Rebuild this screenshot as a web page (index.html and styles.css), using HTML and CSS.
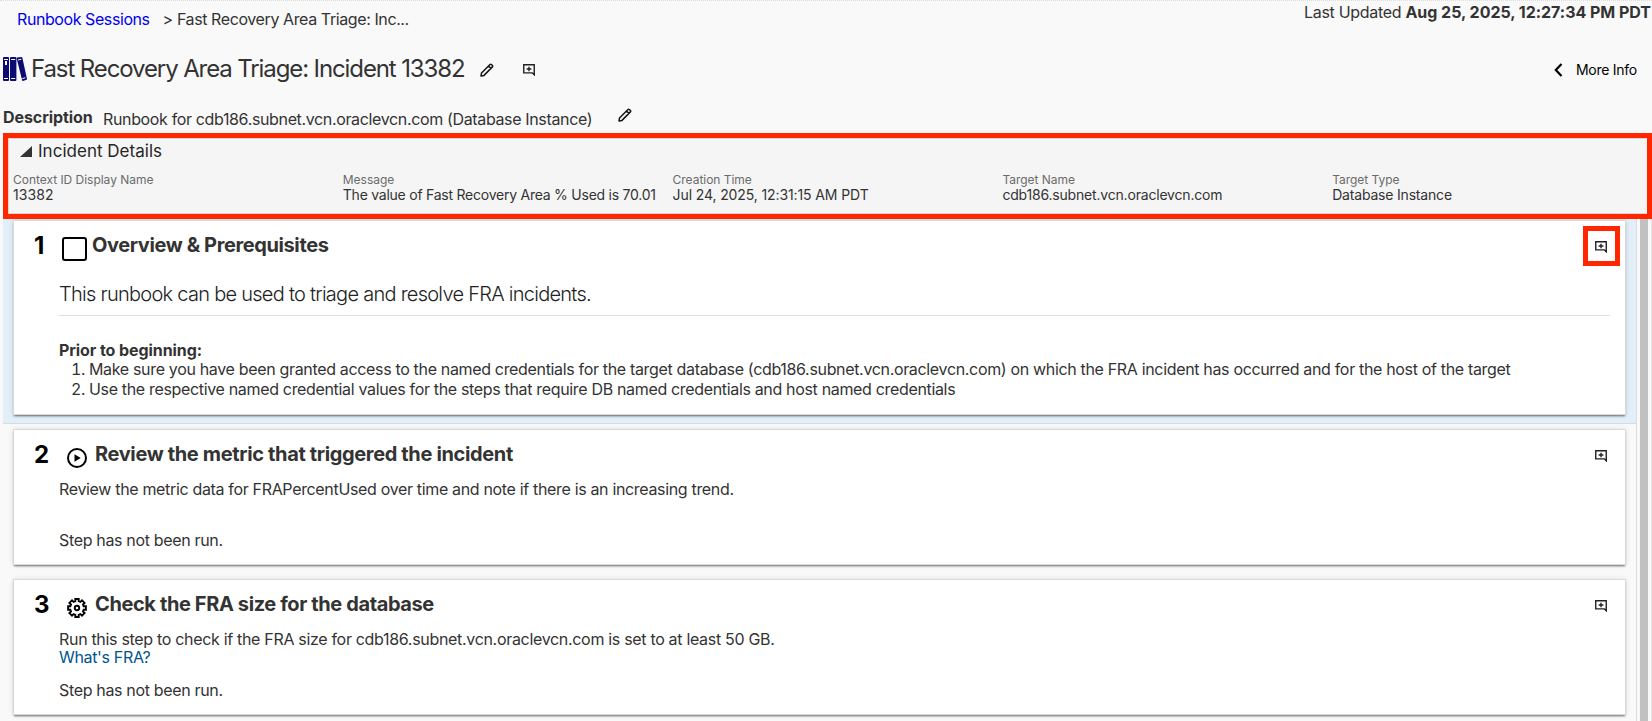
FILE: index.html
```
<!DOCTYPE html>
<html lang="en">
<head>
<meta charset="utf-8">
<title>Fast Recovery Area Triage: Incident 13382</title>
<link rel="stylesheet" href="styles.css">
</head>
<body>
<svg class="defs" aria-hidden="true">
  <symbol id="pencil" viewBox="0 0 14 14">
    <path d="M1 13l.5-3L10 1.5q.7-.6 1.4 0l1 1q.6.7 0 1.4L4 12.4z M8.5 3l2.4 2.4" fill="none" stroke="#161513" stroke-width="1.5" stroke-linejoin="round"/>
  </symbol>
  <symbol id="comment" viewBox="0 0 12 12">
    <path d="M.75.75h10.5v10l-1.9-1.9H.75z" fill="none" stroke="#222" stroke-width="1.4"/>
    <path d="M9 9h3v3z" fill="#222"/>
    <path d="M6 2.8v4.4M3.6 5h4.8" fill="none" stroke="#222" stroke-width="1.4"/>
  </symbol>
</svg>

<header class="topbar">
  <nav class="crumbs"><a class="crumb-link" href="#">Runbook Sessions</a><span class="crumb-current">&gt; Fast Recovery Area Triage: Inc...</span></nav>
  <div class="updated"><span class="updated-label">Last Updated</span> <b class="updated-time">Aug 25, 2025, 12:27:34 PM PDT</b></div>
</header>

<div class="title-row">
  <svg class="books" viewBox="0 0 24 24">
    <g fill="#0b0b73">
      <rect x="0" y="0" width="6" height="24" rx="1"/>
      <rect x="7" y="0" width="6.4" height="24" rx="1"/>
      <path d="M13.6 1.2q0-.6.6-.7L18.600.100q.6 0 .7.500L24 22q.1.600-.5.800L20 24q-.6.100-.8-.500z"/>
    </g>
    <path d="M1 2.500h4M1 21.500h4M8.200 2.500h4M8.200 21.500h4M15 3l3.300-.8M19.300 21.600l3-.8" stroke="#fff" fill="none"/>
    <path d="M3 4v4" stroke="#fff" stroke-width="2"/>
  </svg>
  <h1 class="title">Fast Recovery Area Triage: Incident 13382</h1>
  <svg class="pencil"><use href="#pencil"/></svg>
  <svg class="comment title-comment"><use href="#comment"/></svg>
  <div class="more-info">
    <svg class="chevron" viewBox="0 0 9 14"><path d="M7.500 1L1.800 7l5.700 6" fill="none" stroke="#000" stroke-width="2.200"/></svg>
    <span>More Info</span>
  </div>
</div>

<div class="description-row">
  <b class="description-label">Description</b>
  <span class="description-text">Runbook for cdb186.subnet.vcn.oraclevcn.com (Database Instance)</span>
  <svg class="pencil"><use href="#pencil"/></svg>
</div>

<section class="incident">
  <div class="incident-inner">
    <div class="incident-head">
      <svg class="triangle" viewBox="0 0 11 10"><path d="M11 0v10H0z" fill="#333"/></svg>
      <span>Incident Details</span>
    </div>
    <dl class="details">
      <div><dt>Context ID Display Name</dt><dd class="context-id">13382</dd></div>
      <div><dt>Message</dt><dd class="message">The value of Fast Recovery Area % Used is 70.01</dd></div>
      <div><dt>Creation Time</dt><dd class="time">Jul 24, 2025, 12:31:15 AM PDT</dd></div>
      <div><dt>Target Name</dt><dd>cdb186.subnet.vcn.oraclevcn.com</dd></div>
      <div><dt>Target Type</dt><dd>Database Instance</dd></div>
    </dl>
  </div>
</section>

<div class="scroll-area">
  <main class="steps">
    <div class="step step-active">
      <article class="card card-overview">
        <div class="card-head">
          <span class="number">1</span>
          <span class="checkbox"></span>
          <h2 class="heading">Overview &amp; Prerequisites</h2>
          <span class="callout"><svg class="comment"><use href="#comment"/></svg></span>
        </div>
        <div class="card-body">
          <p class="lead">This runbook can be used to triage and resolve FRA incidents.</p>
          <p class="prior">Prior to beginning:</p>
          <ol class="list">
            <li>Make sure you have been granted access to the named credentials for the target database (cdb186.subnet.vcn.oraclevcn.com) on which the FRA incident has occurred and for the host of the target</li>
            <li>Use the respective named credential values for the steps that require DB named credentials and host named credentials</li>
          </ol>
        </div>
      </article>
    </div>
    <div class="step">
      <article class="card">
        <div class="card-head">
          <span class="number">2</span>
          <svg class="step-icon" viewBox="0 0 20 20"><circle cx="10" cy="10" r="9" fill="none" stroke="#000" stroke-width="2"/><path d="M7.500 6.200l6.200 3.800-6.200 3.800z"/></svg>
          <h2 class="heading heading-review">Review the metric that triggered the incident</h2>
          <svg class="comment"><use href="#comment"/></svg>
        </div>
        <div class="card-body">
          <p>Review the metric data for FRAPercentUsed over time and note if there is an increasing trend.</p>
          <p class="status">Step has not been run.</p>
        </div>
      </article>
    </div>
    <div class="step">
      <article class="card">
        <div class="card-head">
          <span class="number">3</span>
          <svg class="step-icon" viewBox="0 0 20 20">
            <path d="M8.300 1h3.400v2.200l1.700.700 1.600-1.600 2.600 2.600-1.600 1.600.700 1.800h2.200v3.400h-2.200l-.7 1.800 1.600 1.600-2.600 2.600-1.600-1.600-1.700.700v2.200H8.300v-2.200l-1.700-.7L5 17.700l-2.600-2.600L4 13.500l-.7-1.800H1.100V8.300h2.200L4 6.500 2.400 4.900 5 2.300l1.600 1.600 1.700-.7z" fill="none" stroke="#000" stroke-width="1.900"/>
            <circle cx="10" cy="10" r="2.200" fill="none" stroke="#000" stroke-width="1.900"/>
          </svg>
          <h2 class="heading">Check the FRA size for the database</h2>
          <svg class="comment"><use href="#comment"/></svg>
        </div>
        <div class="card-body">
          <p class="run-text">Run this step to check if the FRA size for cdb186.subnet.vcn.oraclevcn.com is set to at least 50 GB.</p>
          <a class="body-link" href="#">What's FRA?</a>
          <p class="status status-near">Step has not been run.</p>
        </div>
      </article>
    </div>
  </main>
  <div class="scrollbar"><div class="thumb"></div></div>
</div>
</body>
</html>
```
FILE: styles.css
```
* { box-sizing: border-box; }
body, h1, h2, p, ol, dl, dd { margin: 0; }
body {
  height: 721px;
  overflow: hidden;
  display: flex;
  flex-direction: column;
  background: #f9f9f9;
  color: #333;
  font: 16px/20px Inter, "Liberation Sans", sans-serif;
  letter-spacing: -0.335px;
  white-space: nowrap;
}
a { text-decoration: none; }
svg { display: block; flex: none; }
.defs { position: absolute; width: 0; height: 0; }

.topbar {
  display: flex;
  justify-content: space-between;
  height: 53px;
  flex: none;
  padding: 1px 1px 0 17px;
  border-top: 1px dotted #ddd;
}
.crumbs { padding-top: 7px; display: flex; gap: 13px; }
.crumb-link { color: #0000ee; letter-spacing: -0.42px; }
.crumb-current { letter-spacing: -0.4px; }
.updated-label { letter-spacing: -0.3px; }
.updated-time { letter-spacing: -0.03px; }

.title-row { display: flex; align-items: flex-start; height: 54px; flex: none; padding-left: 3px; }
.books { width: 24px; height: 24px; margin-top: 4px; }
.title {
  margin: 1px 0 0 4px;
  width: 449px;
  font-size: 24px;
  font-weight: 400;
  line-height: 30px;
  letter-spacing: -1.11px;
}
.pencil { width: 14px; height: 14px; }
.title-row .pencil { margin-top: 10px; }
.comment { width: 12px; height: 12px; }
.title-comment { margin: 11px 0 0 29px; }
.more-info {
  margin: 7px 15px 0 auto;
  display: flex;
  align-items: center;
  gap: 13px;
  color: #000;
  font-size: 14px;
  letter-spacing: -0.26px;
}
.chevron { width: 9px; height: 14px; }

.description-row { display: flex; height: 26px; flex: none; padding-left: 3px; }
.description-label { letter-spacing: -0.08px; width: 100px; }
.description-text { padding-top: 2px; width: 515px; letter-spacing: -0.355px; }
.description-row .pencil { margin-top: 1px; }

.incident { margin-left: 3px; height: 86px; flex: none; border: 5px solid #ff2600; }
.incident-inner { height: 76px; background: #f5f5f5; border: 1px solid #d6d6d6; border-right: 0; }
.incident-head {
  display: flex;
  align-items: center;
  gap: 6px;
  padding: 2px 0 0 11px;
  font-size: 17px;
  letter-spacing: 0.02px;
  color: #262626;
}
.triangle { width: 12px; height: 11px; margin-top: 0; }
.details { display: grid; grid-template-columns: repeat(5, 329.8px); padding: 11px 0 0 4px; }
.details dt { font-size: 12px; line-height: 15px; color: #6b6b6b; letter-spacing: -0.03px; }
.details dd { font-size: 14px; line-height: 16px; letter-spacing: -0.19px; }
.details .context-id { letter-spacing: 0.1px; }
.details .message { letter-spacing: -0.24px; }
.details .time { letter-spacing: -0.11px; }

.scroll-area { flex: 1; min-height: 0; margin-left: 3px; display: flex; }
.steps { width: 1634px; overflow: hidden; border-right: 1px solid #ddd; }
.step { padding: 5px 10px 9px 10px; }
.step-active { padding-top: 1px; padding-bottom: 8px; background: #e2eff8; border-bottom: 1px solid #d2dce3; }
.card {
  height: 136px;
  padding: 9px 15px 0 20px;
  background: #fff;
  border: 1px solid #d9d9d9;
  box-shadow: 0 2px 2px -1px rgba(0, 0, 0, .55), 0 0 5px rgba(0, 0, 0, .1);
}
.card-overview { height: 195px; }
.card-head { display: flex; align-items: flex-start; height: 30px; }
.number { width: 27px; padding-top: 1px; font-size: 24px; line-height: 30px; font-weight: 700; color: #000; letter-spacing: 0; }
.checkbox { width: 25px; height: 24px; margin: 7px -1px 0 1px; border: 2px solid #000; border-radius: 3px; }
.step-icon { width: 20px; height: 20px; margin: 9px 2px 0 6px; }
.heading {
  margin: 3px auto 0 6px;
  font-size: 20px;
  line-height: 24px;
  letter-spacing: -0.39px;
}
.heading-review { letter-spacing: -0.355px; }
.card-head > .comment { margin: 11px 3px 0 0; }
.callout {
  width: 37px;
  height: 40px;
  margin: -4px -10px 0 0;
  padding: 10px 7px;
  border: 5px solid #ff2600;
}
.card-body { padding: 10px 0 0 25px; }
.lead {
  margin-top: 12px;
  height: 34px;
  font-size: 20px;
  line-height: 24px;
  font-weight: 300;
  color: #222;
  letter-spacing: -0.73px;
  border-bottom: 1px solid #ddd;
}
.prior { margin-top: 24px; font-weight: 700; letter-spacing: -0.08px; }
.list { padding-left: 30px; margin-top: -1px; }
.status { margin-top: 31px; }
.status-near { margin-top: 13px; }
.run-text { height: 18px; letter-spacing: -0.315px; }
.body-link { display: block; color: #00558c; }

.scrollbar { width: 15px; padding-left: 3px; border-right: 1px solid #e3e3e3; }
.thumb { width: 8px; height: 100%; background: #c1c1c1; }
```
